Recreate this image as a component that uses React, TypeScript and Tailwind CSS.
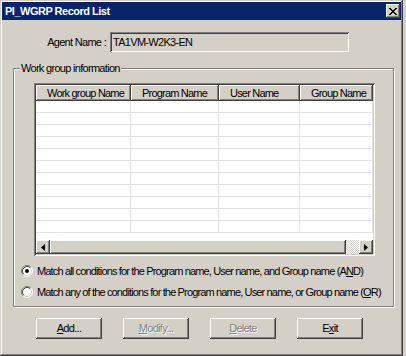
import React from "react";

const raised =
  "shadow-[inset_-1px_-1px_0_#404040,inset_1px_1px_0_#ffffff,inset_-2px_-2px_0_#808080]";
const sunken =
  "shadow-[inset_1px_1px_0_#808080,inset_-1px_-1px_0_#ffffff,inset_2px_2px_0_#404040,inset_-2px_-2px_0_#d4d0c8]";

const columns = [
  { name: "Work group Name", width: "w-[95px]" },
  { name: "Program Name", width: "w-[88px]" },
  { name: "User Name", width: "w-[81px]" },
  { name: "Group Name", width: "w-[73px]" },
];

const rows = Array.from({ length: 11 });

function Arrow({ dir }: { dir: "left" | "right" }) {
  return (
    <svg width="4" height="7" viewBox="0 0 4 7">
      {dir === "left" ? (
        <path d="M4 0 L0 3.5 L4 7 Z" fill="#000" />
      ) : (
        <path d="M0 0 L4 3.5 L0 7 Z" fill="#000" />
      )}
    </svg>
  );
}

function Radio({ checked }: { checked?: boolean }) {
  return (
    <svg width="12" height="12" viewBox="0 0 12 12" className="shrink-0">
      <circle cx="6" cy="6" r="5" fill="#fff" />
      <path d="M2.11 9.89 A5.5 5.5 0 0 1 9.89 2.11" stroke="#808080" fill="none" />
      <path d="M9.89 2.11 A5.5 5.5 0 0 1 2.11 9.89" stroke="#fff" fill="none" />
      <path d="M2.82 9.18 A4.5 4.5 0 0 1 9.18 2.82" stroke="#404040" fill="none" />
      <path d="M9.18 2.82 A4.5 4.5 0 0 1 2.82 9.18" stroke="#d4d0c8" fill="none" />
      {checked && <circle cx="6" cy="6" r="2" fill="#000" />}
    </svg>
  );
}

function Button({ children, disabled }: { children: React.ReactNode; disabled?: boolean }) {
  return (
    <div
      className={`w-[66px] h-[21px] flex items-center justify-center ${raised} ${
        disabled ? "text-[#808080] [text-shadow:1px_1px_0_#ffffff]" : "text-black"
      }`}
    >
      <span>{children}</span>
    </div>
  );
}

export default function App() {
  return (
    <div className="w-[406px] h-[356px] bg-[#d4d0c8] font-['Liberation_Sans',Arial,sans-serif] text-[11px] tracking-[-0.7px] text-black leading-[13px] whitespace-nowrap">
      <div className="w-[403px] h-[356px] p-[2px] flex flex-col shadow-[inset_-1px_-1px_0_#404040,inset_1px_1px_0_#d4d0c8,inset_-2px_-2px_0_#808080,inset_2px_2px_0_#ffffff]">
        {/* title bar */}
        <div className="h-[18px] bg-[#0a246a] flex items-center justify-between pl-[3px] pr-[1px]">
          <span className="text-white font-bold tracking-[-0.5px]">PI_WGRP Record List</span>
          <div className={`w-[14px] h-[14px] bg-[#d4d0c8] flex items-center justify-center ${raised}`}>
            <svg width="8" height="7" viewBox="0 0 8 7">
              <path d="M0 0h2v1h1v1h2V1h1V0h2v1H7v1H6v1H5v1h1v1h1v1h1v1H6V6H5V5H3v1H2v1H0V6h1V5h1V4h1V3H2V2H1V1H0z" fill="#000" />
            </svg>
          </div>
        </div>

        {/* agent name */}
        <div className="flex items-center mt-[12px] gap-[4px]">
          <div className="w-[104px] text-right">Agent Name :</div>
          <div className={`w-[239px] h-[20px] bg-[#d4d0c8] flex items-center pl-[3px] ${sunken}`}>
            TA1VM-W2K3-EN
          </div>
        </div>

        {/* group box */}
        <div className="relative ml-[11px] mt-[16px] w-[381px] h-[239px] border border-[#808080] shadow-[inset_1px_1px_0_#ffffff,1px_1px_0_#ffffff]">
          <span className="absolute left-[6px] -top-[7px] px-[1px] bg-[#d4d0c8]">
            Work group information
          </span>

          {/* list view */}
          <div className={`ml-[20px] mt-[14px] w-[341px] h-[173px] p-[2px] bg-white ${sunken}`}>
            <div className="flex flex-col h-full bg-white overflow-hidden">
              <div className="flex h-[16px] shrink-0 tracking-[-0.8px]">
                {columns.map((c) => (
                  <div
                    key={c.name}
                    className={`${c.width} h-[16px] bg-[#d4d0c8] pl-[11px] flex items-center overflow-hidden ${raised}`}
                  >
                    {c.name}
                  </div>
                ))}
              </div>
              <div className="flex-1 overflow-hidden">
                {rows.map((_, i) => (
                  <div key={i} className="flex h-[12px] border-b border-[#e2e2e2]">
                    {columns.map((c) => (
                      <div key={c.name} className={`${c.width} border-r border-[#e2e2e2]`} />
                    ))}
                  </div>
                ))}
              </div>
              <div className="flex h-[14px] shrink-0 bg-[repeating-conic-gradient(#ffffff_0_25%,#d4d0c8_0_50%)] bg-[length:2px_2px]">
                <div className={`w-[14px] h-[14px] bg-[#d4d0c8] flex items-center justify-center ${raised}`}>
                  <Arrow dir="left" />
                </div>
                <div className={`w-[296px] h-[14px] bg-[#d4d0c8] ${raised}`} />
                <div className="flex-1" />
                <div className={`w-[14px] h-[14px] bg-[#d4d0c8] flex items-center justify-center ${raised}`}>
                  <Arrow dir="right" />
                </div>
              </div>
            </div>
          </div>

          {/* radios */}
          <div className="flex flex-col ml-[7px] mt-[8px] gap-[7px] tracking-[-0.85px]">
            <div className="flex items-center gap-[4px] h-[14px]">
              <Radio checked />
              <span>
                Match all conditions for the Program name, User name, and Group name (A<u>N</u>D)
              </span>
            </div>
            <div className="flex items-center gap-[4px] h-[14px]">
              <Radio />
              <span>
                Match any of the conditions for the Program name, User name, or Group name (<u>O</u>R)
              </span>
            </div>
          </div>
        </div>

        {/* buttons */}
        <div className="flex ml-[34px] mt-[11px] gap-[21px]">
          <Button>
            <u>A</u>dd...
          </Button>
          <Button disabled>
            <u>M</u>odify...
          </Button>
          <Button disabled>
            <u>D</u>elete
          </Button>
          <Button>
            E<u>x</u>it
          </Button>
        </div>
      </div>
    </div>
  );
}
